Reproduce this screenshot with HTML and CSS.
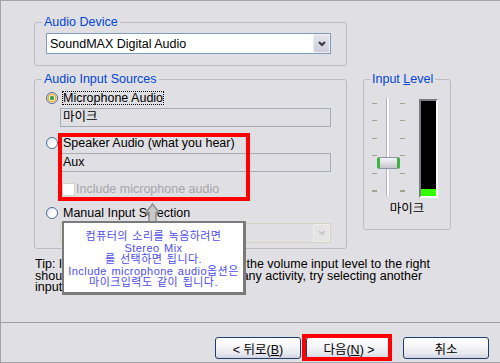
FILE: index.html
```html
<!DOCTYPE HTML>
<html lang="ko">
<head>
<meta name="viewport" content="width=device-width, initial-scale=1">
<title>Audio Input</title>
<link rel="stylesheet" href="styles.css">
</head>
<body>

<svg class="defs" aria-hidden="true">
  <defs>
    <linearGradient id="radioFill" x1="0" y1="0" x2="1" y2="1">
      <stop offset="0" stop-color="#dcdce4"/>
      <stop offset="0.6" stop-color="#ffffff"/>
      <stop offset="1" stop-color="#ffffff"/>
    </linearGradient>
  </defs>
</svg>

<div class="dialog">
  <div class="main">
    <fieldset class="group device">
      <legend>Audio Device</legend>
      <div class="combo">
        <span class="combo-text">SoundMAX Digital Audio</span>
        <span class="combo-btn">
          <svg viewBox="0 0 8 6" width="8" height="6"><polyline points="1,1 4,4 7,1" fill="none" stroke="#34343c" stroke-width="2"/></svg>
        </span>
      </div>
    </fieldset>

    <div class="group-row">
      <fieldset class="group sources">
        <legend>Audio Input Sources</legend>

        <div class="radio-row">
          <svg class="radio" viewBox="0 0 12 12"><circle cx="6" cy="6" r="5.5" fill="url(#radioFill)" stroke="#4c6a94"/><circle cx="6" cy="6" r="3.8" fill="none" stroke="#f0ad3c" stroke-width="1.6"/><circle cx="6" cy="6" r="2.2" fill="#3aa53a"/></svg>
          <span class="label focus">Microphone Audio</span>
        </div>
        <div class="field">마이크</div>

        <div class="radio-row spaced">
          <svg class="radio" viewBox="0 0 12 12"><circle cx="6" cy="6" r="5.5" fill="url(#radioFill)" stroke="#4c6a94"/></svg>
          <span class="label">Speaker Audio (what you hear)</span>
        </div>
        <div class="field">Aux</div>

        <div class="check-row">
          <span class="checkbox"></span>
          <span class="label disabled">Include microphone audio</span>
        </div>

        <div class="radio-row spaced">
          <svg class="radio" viewBox="0 0 12 12"><circle cx="6" cy="6" r="5.5" fill="url(#radioFill)" stroke="#4c6a94"/></svg>
          <span class="label">Manual Input Selection</span>
        </div>
        <div class="combo disabled">
          <span class="combo-text"></span>
          <span class="combo-btn">
            <svg viewBox="0 0 8 6" width="8" height="6"><polyline points="1,1 4,4 7,1" fill="none" stroke="#c9c8cc" stroke-width="2"/></svg>
          </span>
        </div>
      </fieldset>

      <fieldset class="group level">
        <legend>Input <u>L</u>evel</legend>
        <div class="level-row">
          <div class="slider">
            <div class="ticks"><span></span><span></span><span></span><span></span><span></span><span class="end"></span></div>
            <div class="track"></div>
            <div class="ticks"><span></span><span></span><span></span><span></span><span></span><span class="end"></span></div>
            <div class="thumb"></div>
          </div>
          <div class="meter"><div class="meter-fill" style="height: 7px"></div></div>
        </div>
        <div class="level-label">마이크</div>
      </fieldset>
    </div>

    <p class="tip">Tip: If you speak into the microphone, the volume input level to the right<br>should move. If the bar doesn't show any activity, try selecting another<br>input source.</p>
  </div>

  <div class="footer">
    <button class="btn">&lt; 뒤로(<u>B</u>)</button>
    <button class="btn">다음(<u>N</u>) &gt;</button>
    <button class="btn cancel">취소</button>
  </div>

  <!-- annotations drawn over the dialog -->
  <div class="mark mark-speaker"></div>
  <div class="mark mark-next"></div>
  <svg class="callout-arrow" viewBox="0 0 15 20"><polygon points="7.5,1 14,9.5 11,9.5 11,19.5 4,19.5 4,9.5 1,9.5" fill="#c8c8c8" stroke="#8e8e8e" stroke-width="1.5"/></svg>
  <div class="callout">
    컴퓨터의 소리를 녹음하려면<br>
    Stereo Mix<br>
    를 선택하면 됩니다.<br>
    Include microphone audio옵션은<br>
    마이크입력도 같이 됩니다.
  </div>
</div>

</body>
</html>
```

FILE: styles.css
```css
/* Page */
body {
  margin: 0;
  font-family: "Liberation Sans", "Noto Sans CJK KR", sans-serif;
  font-size: 12.5px;
  color: #000000;
}

.defs {
  position: absolute;
  width: 0;
  height: 0;
}

/* Dialog frame */
.dialog {
  position: relative;
  width: 500px;
  height: 363px;
  box-sizing: border-box;
  border-top: 1px solid #a3a3a7;
  border-left: 1px solid #a3a3a7;
  border-bottom: 1px solid #a3a3a7;
  background: #e0dfe3;
  display: flex;
  flex-direction: column;
}

.main {
  flex: 1;
  padding: 13px 0 0 33px;
}

/* Group boxes */
.group {
  margin: 0;
  border: 1px solid #bcbcc1;
  border-radius: 3px;
  min-width: 0;
  box-sizing: border-box;
}

.group legend {
  padding: 0 2px;
  margin-left: -4px;
  color: #0046d5;
  line-height: 16px;
}

.device {
  width: 313px;
  padding: 3px 15px 11px 11px;
}

.group-row {
  display: flex;
  align-items: flex-start;
  gap: 16px;
  margin-top: 5px;
}

.sources {
  width: 313px;
  padding: 3px 15px 5px 11px;
}

/* Combo boxes */
.combo {
  height: 21px;
  box-sizing: border-box;
  border: 1px solid #7f9db9;
  background: #ffffff;
  display: flex;
  align-items: center;
}

.combo-text {
  flex: 1;
  padding-left: 3px;
}

.combo-btn {
  width: 17px;
  height: 19px;
  box-sizing: border-box;
  border: 1px solid #eeeef4;
  border-radius: 2px;
  background: linear-gradient(to bottom, #e4e4ec, #cfcfdc);
  display: flex;
  align-items: center;
  justify-content: center;
}

.combo.disabled {
  height: 20px;
  margin: 2px 0 0 14px;
  border-color: #d6d3c2;
  background: transparent;
}

.combo.disabled .combo-btn {
  height: 18px;
  border-color: #eeede6;
  background: #e6e5e6;
}

/* Radio and check rows */
.radio-row {
  display: flex;
  align-items: center;
  height: 16px;
}

.radio-row.spaced {
  margin-top: 8px;
}

.radio {
  width: 12px;
  height: 12px;
  margin-right: 4px;
  flex: none;
}

.label {
  border: 1px solid transparent;
  line-height: 12px;
  white-space: nowrap;
}

.label.focus {
  border: 1px dotted #000000;
}

.label.disabled {
  color: #a7a6aa;
}

.check-row {
  display: flex;
  align-items: center;
  height: 16px;
  margin: 9px 0 0 16px;
}

.checkbox {
  width: 13px;
  height: 13px;
  box-sizing: border-box;
  border: 1px solid #d4d2c8;
  background: #ffffff;
  flex: none;
}

/* Read-only text fields */
.field {
  height: 19px;
  box-sizing: border-box;
  margin: 2px 0 0 14px;
  border: 1px solid #a5acb4;
  padding-left: 2px;
  line-height: 17px;
}

/* Input level */
.level {
  width: 88px;
  padding: 11px 8px 13px 8px;
}

.level legend {
  margin-left: -2px;
}

.level-row {
  display: flex;
  align-items: flex-start;
  gap: 14px;
}

.slider {
  position: relative;
  display: flex;
  height: 98px;
}

.ticks {
  width: 5px;
  box-sizing: border-box;
  padding: 5px 0 4px;
  display: flex;
  flex-direction: column;
  justify-content: space-between;
}

.ticks span {
  height: 1px;
  background: #a4a492;
}

.ticks span.end {
  height: 2px;
}

.track {
  width: 4px;
  margin: 0 10px 0 9px;
  background: linear-gradient(to right, #b4b4b8 1px, #ffffff 1px, #ffffff 3px, #d4d4d8 3px);
}

.thumb {
  position: absolute;
  left: 5px;
  top: 59px;
  width: 23px;
  height: 12px;
  box-sizing: border-box;
  border-top: 1px solid #8e94a6;
  border-bottom: 1px solid #8e94a6;
  border-left: 3px solid #3fb33f;
  border-right: 3px solid #3fb33f;
  border-radius: 2px;
  background: linear-gradient(to bottom, #f6f6f8, #dcdce4 55%, #c4c4ce);
}

.meter {
  margin-top: 1px;
  width: 19px;
  height: 99px;
  box-sizing: border-box;
  border-left: 2px solid #7c7c80;
  border-top: 2px solid #7c7c80;
  border-right: 2px solid #ffffff;
  border-bottom: 2px solid #ffffff;
  background: #000000;
  display: flex;
  align-items: flex-end;
}

.meter-fill {
  width: 100%;
  background: #33ff00;
}

.level-label {
  margin-top: 4px;
  text-align: center;
  line-height: 14px;
}

/* Tip text */
.tip {
  margin: 10px 0 0 1px;
  line-height: 11.7px;
  white-space: nowrap;
}

/* Wizard buttons */
.footer {
  height: 40px;
  box-sizing: border-box;
  border-top: 1px solid #a0a0a4;
  padding: 14px 11px 0 0;
  display: flex;
  justify-content: flex-end;
  align-items: flex-start;
  gap: 5px;
}

.btn {
  width: 86px;
  height: 22px;
  padding: 0;
  font: inherit;
  color: #000000;
  border: 1px solid #1c3f6e;
  border-radius: 3px;
  background: linear-gradient(to bottom, #ffffff 0%, #f6f6f9 40%, #e6e6ee 80%, #d2d2e0 100%);
}

.btn.cancel {
  margin-left: 6px;
}

/* Red highlight marks and callout */
.mark {
  position: absolute;
  box-sizing: border-box;
  border: 4px solid #ff0000;
}

.mark-speaker {
  left: 57px;
  top: 132px;
  width: 192px;
  height: 68px;
}

.mark-next {
  left: 301px;
  top: 333px;
  width: 90px;
  height: 27px;
}

.callout-arrow {
  position: absolute;
  left: 144px;
  top: 202px;
  width: 15px;
  height: 20px;
}

.callout {
  position: absolute;
  left: 61px;
  top: 220px;
  width: 184px;
  height: 74px;
  box-sizing: border-box;
  border: 2px solid #7a7a7a;
  border-right-width: 3px;
  border-bottom-width: 3px;
  background: #ffffff;
  color: #4e4eec;
  text-align: center;
  font-size: 11px;
  line-height: 11.6px;
  letter-spacing: 0.45px;
  word-spacing: 1px;
  padding-top: 8px;
}
```
